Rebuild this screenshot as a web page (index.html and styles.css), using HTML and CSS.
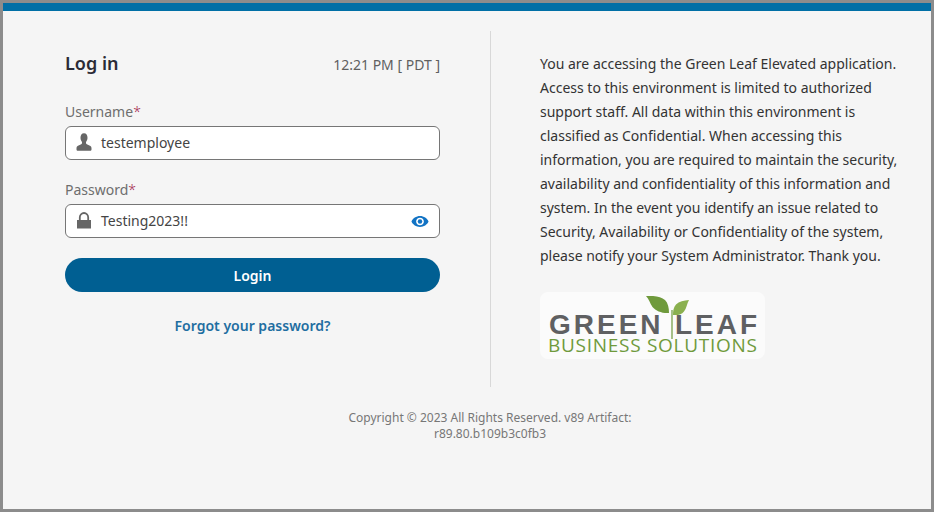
FILE: index.html
```html
<!DOCTYPE html>
<html lang="en">
<head>
<meta charset="utf-8">
<title>Log in</title>
<link rel="stylesheet" href="styles.css">
</head>
<body>
<div class="frame">
  <div class="topbar"></div>
  <main class="columns">
    <section class="form-col">
      <div class="head">
        <h1 class="title">Log in</h1>
        <span class="time">12:21 PM [ PDT ]</span>
      </div>
      <div class="field">
        <label class="label">Username<span class="req">*</span></label>
        <div class="input">
          <svg class="icon" viewBox="0 0 16 18" width="16" height="18"><path fill="#666" d="M8 .3C5.700.3 4.500 2.200 4.500 4.800c0 1.700.6 3.200 1.500 4.100v1.200c0 .5-.3.9-.8 1.100L2 12.800C.9 13.400.5 14.200.5 15.200v1.200c0 .8.600 1.300 1.300 1.300h12.400c.7 0 1.300-.5 1.300-1.300v-1.200c0-1-.4-1.800-1.500-2.400l-3.200-1.600c-.5-.2-.8-.6-.8-1.100V8.900c.9-.9 1.500-2.400 1.500-4.100C11.500 2.200 10.300.3 8 .3z"/></svg>
          <span class="value">testemployee</span>
        </div>
      </div>
      <div class="field">
        <label class="label">Password<span class="req">*</span></label>
        <div class="input">
          <svg class="icon" viewBox="0 0 16 18" width="16" height="18"><path fill="none" stroke="#666" stroke-width="1.800" d="M3.800 10V6.400a4.200 4.400 0 0 1 8.400 0V10"/><rect x="1" y="9" width="14" height="8.500" fill="#666"/></svg>
          <span class="value">Testing2023!!</span>
          <svg class="eye" viewBox="0 0 20 14" width="18" height="13"><path fill="#1273c4" d="M10 1C5.700 1 2.100 3.500.5 7c1.600 3.500 5.200 6 9.500 6s7.900-2.500 9.500-6C17.900 3.500 14.300 1 10 1zm0 10.200C7.600 11.200 5.700 9.300 5.700 7S7.600 2.800 10 2.800s4.300 1.900 4.300 4.200-1.900 4.200-4.300 4.200z"/><circle cx="10" cy="7" r="2.500" fill="#1273c4"/></svg>
        </div>
      </div>
      <button class="login" type="button">Login</button>
      <a class="forgot" href="#">Forgot your password?</a>
    </section>
    <div class="divider"></div>
    <section class="info-col">
      <p class="notice">You are accessing the Green Leaf Elevated application. Access to this environment is limited to authorized support staff. All data within this environment is classified as Confidential. When accessing this information, you are required to maintain the security, availability and confidentiality of this information and system. In the event you identify an issue related to Security, Availability or Confidentiality of the system, please notify your System Administrator. Thank you.</p>
      <div class="logo">
        <svg class="leaves" viewBox="0 0 46 46" width="46" height="46"><path fill="#6f9a3c" d="M0 0c8-.5 15 .5 19 4 3 3 4 8 4 13-7 .5-13-2-16.500-6C4 7.500 3 3 0 0z"/><path fill="#8ab04f" d="M43 4c-5 .5-10 1.500-13 4.500-2.500 2.500-3 6.500-3 10.500 5 .5 8.500-.5 11-3.500 2.500-3 3-8 5-11.500z"/><path fill="none" stroke="#6f9a3c" stroke-width="1.200" d="M26 43V14"/></svg>
        <div class="logo-top"><span>GREEN</span><span>LEAF</span></div>
        <div class="logo-bottom">BUSINESS SOLUTIONS</div>
      </div>
    </section>
  </main>
  <footer class="copy">Copyright © 2023 All Rights Reserved. v89 Artifact: r89.80.b109b3c0fb3</footer>
</div>
</body>
</html>
```
FILE: styles.css
```css
* { box-sizing: border-box; }
html, body { margin: 0; height: 100%; }
body { font-family: "Noto Sans", sans-serif; color: #333; }
.frame {
  width: 934px;
  height: 512px;
  border: 3px solid #8c8c8c;
  background: #f5f5f5;
  display: flex;
  flex-direction: column;
}
.topbar { height: 8px; background: #006fa6; flex: none; }
.columns {
  display: flex;
  margin-top: 20px;
  padding-left: 62px;
  height: 356px;
}
.form-col { width: 375px; flex: none; display: flex; flex-direction: column; }
.head {
  display: flex;
  justify-content: space-between;
  align-items: baseline;
  padding-top: 20px;
  height: 44px;
}
.title { margin: 0; font-size: 18px; font-weight: 600; line-height: 24px; color: #2b2b36; }
.time { font-size: 14px; line-height: 24px; color: #5f5f5f; }
.field { margin-top: 27px; display: flex; flex-direction: column; }
.field + .field { margin-top: 20px; }
.label { font-size: 14px; line-height: 20px; color: #6e6e6e; margin-bottom: 4px; }
.req { color: #a3214a; font-weight: 300; }
.input {
  height: 34px;
  background: #fff;
  border: 1px solid #767676;
  border-radius: 6px;
  display: flex;
  align-items: center;
  padding: 0 10px 2px;
}
.icon { flex: none; }
.value { font-size: 14px; color: #444; margin-left: 9px; flex: 1; }
.eye { flex: none; margin-top: 2px; }
.login {
  margin-top: 20px;
  height: 34px;
  border: 0;
  border-radius: 17px;
  background: #005f92;
  color: #fff;
  font: 600 14px "Noto Sans", sans-serif;
}
.forgot {
  margin-top: 24px;
  align-self: center;
  font-size: 14px;
  font-weight: 600;
  line-height: 20px;
  color: #1f6ea1;
  text-decoration: none;
}
.divider { width: 1px; background: #d8d8d8; margin-left: 50px; flex: none; }
.info-col { margin-left: 49px; width: 360px; flex: none; padding-top: 21px; }
.notice { margin: 0; font-size: 14px; line-height: 24px; color: #333; }
.logo {
  position: relative;
  margin-top: 24px;
  width: 225px;
  height: 67px;
  background: #fbfbfb;
  border-radius: 8px;
  padding: 21px 5px 0 9px;
}
.leaves { position: absolute; left: 106px; top: 4px; }
.logo-top {
  display: flex;
  justify-content: space-between;
  font-family: "Liberation Sans", sans-serif;
  font-size: 28px;
  font-weight: 700;
  line-height: 24px;
  letter-spacing: 3px;
  color: #5f6062;
}
.logo-bottom {
  margin-left: -1px;
  font-family: "Open Sans", sans-serif;
  font-size: 19px;
  line-height: 16px;
  letter-spacing: .72px;
  white-space: nowrap;
  color: #6f9a3c;
}
.copy {
  width: 300px;
  margin: 23px 0 0 337px;
  text-align: center;
  font-size: 12px;
  line-height: 16px;
  color: #777;
}
```
